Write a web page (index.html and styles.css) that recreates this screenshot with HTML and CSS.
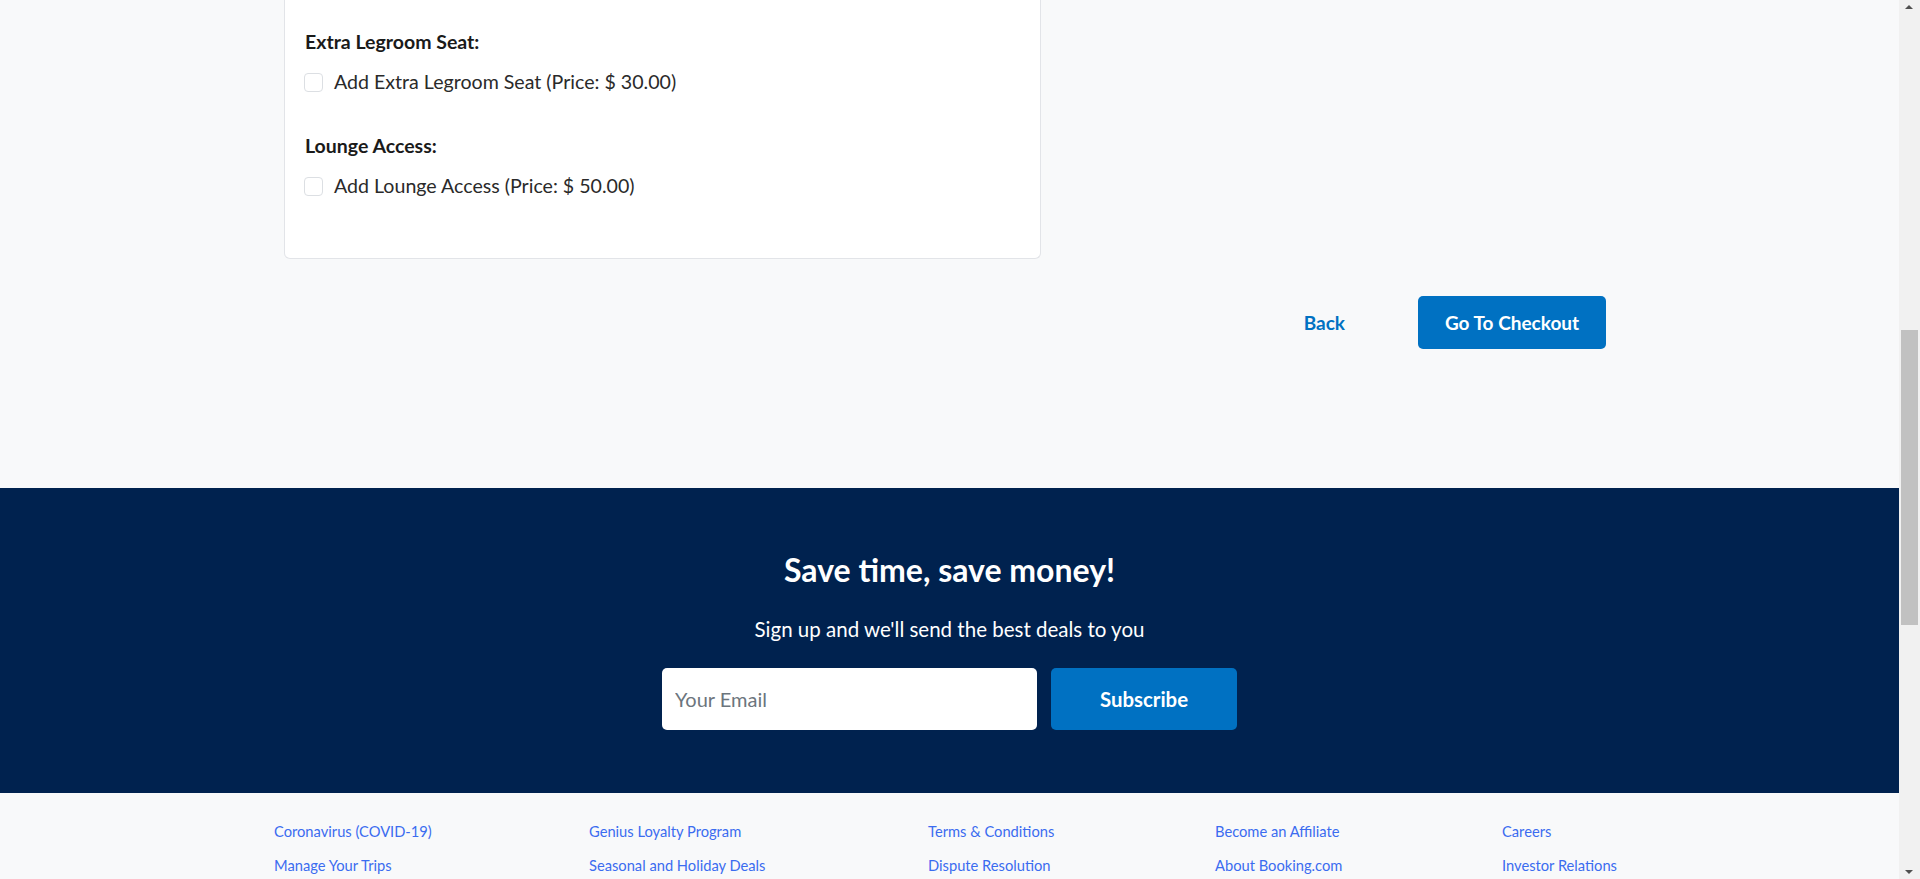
FILE: index.html
```html
<!DOCTYPE html>
<html lang="en">
<head>
<meta charset="utf-8">
<title>Add-ons</title>
<link rel="stylesheet" href="styles.css">
</head>
<body>
<div class="page">
  <main class="main">
    <section class="card">
      <div class="option">
        <h3 class="option-title">Extra Legroom Seat:</h3>
        <label class="check-row"><input type="checkbox" class="check"><span>Add Extra Legroom Seat (Price: $ 30.00)</span></label>
      </div>
      <div class="option">
        <h3 class="option-title">Lounge Access:</h3>
        <label class="check-row"><input type="checkbox" class="check"><span>Add Lounge Access (Price: $ 50.00)</span></label>
      </div>
    </section>
    <div class="actions">
      <a class="back" href="#">Back</a>
      <button class="checkout" type="button">Go To Checkout</button>
    </div>
  </main>
  <section class="newsletter">
    <h2 class="nl-title">Save time, save money!</h2>
    <p class="nl-sub">Sign up and we'll send the best deals to you</p>
    <form class="nl-form">
      <input class="nl-input" type="email" placeholder="Your Email">
      <button class="nl-btn" type="button">Subscribe</button>
    </form>
  </section>
  <footer class="links">
    <ul class="link-col">
      <li><a href="#">Coronavirus (COVID-19)</a></li>
      <li><a href="#">Manage Your Trips</a></li>
    </ul>
    <ul class="link-col">
      <li><a href="#">Genius Loyalty Program</a></li>
      <li><a href="#">Seasonal and Holiday Deals</a></li>
    </ul>
    <ul class="link-col">
      <li><a href="#">Terms &amp; Conditions</a></li>
      <li><a href="#">Dispute Resolution</a></li>
    </ul>
    <ul class="link-col">
      <li><a href="#">Become an Affiliate</a></li>
      <li><a href="#">About Booking.com</a></li>
    </ul>
    <ul class="link-col">
      <li><a href="#">Careers</a></li>
      <li><a href="#">Investor Relations</a></li>
    </ul>
  </footer>
</div>
<div class="scrollbar" aria-hidden="true">
  <span class="sb-arrow sb-up"></span>
  <span class="sb-thumb"></span>
  <span class="sb-arrow sb-down"></span>
</div>
</body>
</html>
```
FILE: styles.css
```css
* { box-sizing: border-box; }
html, body { margin: 0; padding: 0; overflow: hidden; height: 100%; }
body {
  background: #f8f9fa;
  font-family: Lato, "Liberation Sans", sans-serif;
  color: #212529;
}
.page { width: 1899px; }

.main { padding-left: 284px; }

.card {
  width: 757px;
  background: #fff;
  border: 1px solid #e2e4e8;
  border-top: none;
  border-radius: 0 0 6px 6px;
  padding: 30px 20px 60px 20px;
}
.option + .option { margin-top: 40px; }
.option-title {
  margin: 0;
  font-size: 19.5px;
  line-height: 24px;
  font-weight: 700;
  color: #1a1a1a;
}
.check-row {
  display: flex;
  align-items: center;
  margin-top: 16px;
  font-size: 19.6px;
  line-height: 24px;
  color: #2a2a2a;
}
.check {
  appearance: none;
  -webkit-appearance: none;
  flex: none;
  width: 19px;
  height: 19px;
  margin: 0 11px 0 -1px;
  border: 1px solid #dcdfe3;
  border-radius: 4px;
  background: #fff;
}

.actions {
  width: 1322px;
  margin-top: 37px;
  display: flex;
  justify-content: flex-end;
  align-items: center;
}
.back {
  color: #0071c2;
  text-decoration: none;
  font-size: 19px;
  font-weight: 700;
  margin-right: 73px;
}
.checkout {
  width: 188px;
  height: 53px;
  border: none;
  border-radius: 5px;
  background: #0071c2;
  color: #fff;
  font-family: inherit;
  font-size: 19px;
  font-weight: 700;
}

.newsletter {
  margin-top: 139px;
  height: 305px;
  background: #00224f;
  padding-top: 62px;
  text-align: center;
  color: #fff;
}
.nl-title {
  margin: 0;
  font-size: 32px;
  line-height: 40px;
  font-weight: 700;
}
.nl-sub {
  margin: 25px 0 0;
  font-size: 20.5px;
  line-height: 28px;
}
.nl-form {
  margin-top: 25px;
  display: flex;
  justify-content: center;
  gap: 14px;
}
.nl-input {
  width: 375px;
  height: 62px;
  border: none;
  border-radius: 5px;
  padding: 0 13px;
  font-family: inherit;
  font-size: 20px;
  color: #333;
}
.nl-input::placeholder { color: #6c757d; }
.nl-btn {
  width: 186px;
  height: 62px;
  border: none;
  border-radius: 5px;
  background: #0071c2;
  color: #fff;
  font-family: inherit;
  font-size: 20.4px;
  font-weight: 700;
}

.links {
  display: grid;
  grid-template-columns: 315px 339px 287px 287px auto;
  padding: 28px 0 0 274px;
}
.link-col {
  list-style: none;
  margin: 0;
  padding: 0;
  display: flex;
  flex-direction: column;
  gap: 14px;
}
.link-col a {
  display: block;
  font-size: 14.7px;
  line-height: 20px;
  color: #3b6cf0;
  text-decoration: none;
}

.scrollbar {
  position: fixed;
  top: 0;
  right: 0;
  width: 21px;
  height: 100%;
  background: #f1f1f1;
}
.sb-thumb {
  position: absolute;
  left: 2px;
  right: 2px;
  top: 330px;
  height: 295px;
  background: #c1c1c1;
}
.sb-arrow {
  position: absolute;
  left: 6px;
  width: 0;
  height: 0;
  border-left: 4.5px solid transparent;
  border-right: 4.5px solid transparent;
}
.sb-up { top: 5px; border-bottom: 4.5px solid #505050; }
.sb-down { bottom: 5px; border-top: 4.5px solid #505050; }
```
